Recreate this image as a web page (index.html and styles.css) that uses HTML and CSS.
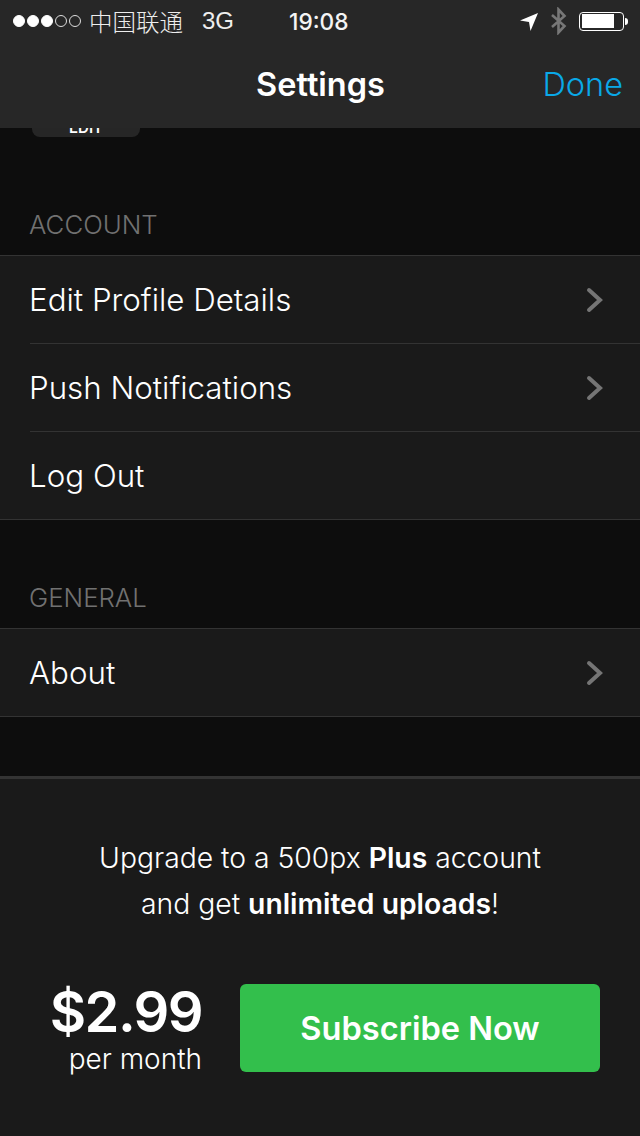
FILE: index.html
```html
<!DOCTYPE html>
<html lang="zh">
<head>
    <meta charset="UTF-8">
    <meta name="viewport" content="width=device-width, initial-scale=1.0">
    <title>Settings</title>
    <link rel="stylesheet" href="styles.css">
</head>
<body>

<div class="topbar">
    <div class="status">
        <div class="signal">
            <span class="dot on"></span><span class="dot on"></span><span class="dot on"></span><span class="dot"></span><span class="dot"></span>
        </div>
        <span class="carrier">中国联通</span>
        <span class="network">3G</span>
        <span class="time">19:08</span>
        <div class="status-right">
            <svg class="arrow" width="20" height="20" viewBox="0 0 20 20"><path d="M1 9.500 19 2 11.500 20 10 11z" fill="#fff"/></svg>
            <svg class="bt" width="17" height="28" viewBox="0 0 17 28"><path d="M2 8 14.500 19 8.500 25.500V2.500L14.500 9 2 20" fill="none" stroke="#777" stroke-width="2.600"/></svg>
            <div class="battery"><div class="battery-fill"></div></div>
            <div class="battery-tip"></div>
        </div>
    </div>
    <div class="navbar">
        <span class="nav-side"></span>
        <h1 class="nav-title">Settings</h1>
        <span class="nav-side nav-done">Done</span>
    </div>
</div>

<div class="scroll">
    <div class="edit-chip"><span>EDIT</span></div>

    <div class="section-label first">ACCOUNT</div>
    <div class="group">
        <div class="row">
            <span>Edit Profile Details</span>
            <svg class="chevron" width="18" height="26" viewBox="0 0 18 26"><path d="M3 3 14 13 3 23" fill="none" stroke="#757575" stroke-width="4" stroke-linecap="round" stroke-linejoin="miter"/></svg>
        </div>
        <div class="row">
            <span>Push Notifications</span>
            <svg class="chevron" width="18" height="26" viewBox="0 0 18 26"><path d="M3 3 14 13 3 23" fill="none" stroke="#757575" stroke-width="4" stroke-linecap="round" stroke-linejoin="miter"/></svg>
        </div>
        <div class="row">
            <span>Log Out</span>
        </div>
    </div>

    <div class="section-label">GENERAL</div>
    <div class="group">
        <div class="row">
            <span>About</span>
            <svg class="chevron" width="18" height="26" viewBox="0 0 18 26"><path d="M3 3 14 13 3 23" fill="none" stroke="#757575" stroke-width="4" stroke-linecap="round" stroke-linejoin="miter"/></svg>
        </div>
    </div>
</div>

<div class="upgrade">
    <p class="pitch">Upgrade to a 500px <b>Plus</b> account<br>and get <b>unlimited uploads</b>!</p>
    <div class="buy">
        <div class="price">
            <div class="amount">$2.99</div>
            <div class="period">per month</div>
        </div>
        <a class="subscribe">Subscribe Now</a>
    </div>
</div>

</body>
</html>
```

FILE: styles.css
```css
html, body {
    margin: 0;
    padding: 0;
}
body {
    width: 640px;
    height: 1136px;
    overflow: hidden;
    background: #1a1a1a;
    color: #fff;
    font-family: 'Inter', 'Liberation Sans', 'Noto Sans CJK SC', sans-serif;
    font-weight: 300;
    display: flex;
    flex-direction: column;
}

/* top bar */
.topbar {
    height: 128px;
    background: #272727;
    flex: none;
}
.status {
    height: 42px;
    display: flex;
    align-items: center;
    padding: 0 12px 0 13px;
    font-family: 'Liberation Sans', 'Noto Sans CJK SC', sans-serif;
    font-weight: 400;
    font-size: 24px;
}
.signal {
    display: flex;
    gap: 2px;
}
.dot {
    width: 12px;
    height: 12px;
    box-sizing: border-box;
    border: 1px solid #ddd;
    border-radius: 50%;
}
.dot.on {
    background: #fff;
    border-color: #fff;
}
.carrier {
    margin-left: 8px;
    font-family: 'Noto Sans CJK SC', sans-serif;
    font-weight: 300;
    font-size: 23.500px;
    color: #eee;
}
.network {
    margin-left: 19px;
    color: #eee;
}
.time {
    margin-left: 55px;
    font-family: 'Inter', sans-serif;
    font-size: 22.700px;
    font-weight: 500;
    color: #f4f4f4;
}
.status-right {
    margin-left: auto;
    display: flex;
    align-items: center;
}
.arrow {
    margin-right: 11px;
}
.bt {
    margin-right: 12px;
}
.battery {
    width: 45px;
    height: 19px;
    box-sizing: border-box;
    border: 1.500px solid #fff;
    border-radius: 4px;
    padding: 1.500px;
}
.battery-fill {
    width: 32px;
    height: 100%;
    background: #fff;
}
.battery-tip {
    width: 3px;
    height: 7px;
    margin-left: 1px;
    background: #fff;
    border-radius: 0 3px 3px 0;
}
.navbar {
    height: 84px;
    display: flex;
    align-items: center;
    justify-content: space-between;
    padding: 0 17px 2px 18px;
}
.nav-side {
    width: 100px;
    text-align: right;
}
.nav-title {
    margin: 0;
    font-size: 32.500px;
    font-weight: 600;
}
.nav-done {
    font-size: 32.500px;
    color: #0aa9e8;
}

/* list */
.scroll {
    height: 648px;
    flex: none;
    background: #0d0d0d;
    overflow: hidden;
}
.edit-chip {
    width: 108px;
    height: 9px;
    margin-left: 32px;
    background: #262626;
    border-radius: 0 0 8px 8px;
    overflow: hidden;
    text-align: center;
    font-size: 15px;
    font-weight: 600;
    line-height: 0;
}
.section-label {
    height: 45px;
    margin-top: 63px;
    padding-left: 29px;
    font-size: 25.800px;
    line-height: 30px;
    color: #717171;
}
.section-label.first {
    margin-top: 73px;
}
.group {
    background: #1a1a1a;
    border-top: 1px solid #333;
    border-bottom: 1px solid #333;
}
.row {
    height: 87px;
    margin-left: 30px;
    padding-right: 36px;
    display: flex;
    align-items: center;
    justify-content: space-between;
    font-size: 31.300px;
    border-bottom: 1px solid #333;
}
.row span {
    margin: 1px 0 0 -1px;
}
.row:last-child {
    border-bottom: none;
}

/* upgrade panel */
.upgrade {
    flex: 1;
    border-top: 3px solid #333;
    background: #1a1a1a;
}
.pitch {
    margin: 56px 0 0;
    text-align: center;
    font-size: 28.300px;
    line-height: 46px;
}
.pitch b {
    font-weight: 600;
}
.buy {
    display: flex;
    align-items: center;
    gap: 38px;
    margin-top: 53px;
    padding: 0 40px;
}
.price {
    width: 162px;
    padding-top: 2px;
    text-align: right;
}
.amount {
    font-size: 56px;
    font-weight: 600;
    line-height: 60px;
    letter-spacing: -1.600px;
}
.period {
    font-size: 28px;
    line-height: 34px;
}
.subscribe {
    flex: 1;
    height: 88px;
    display: flex;
    align-items: center;
    justify-content: center;
    background: #33bf4c;
    border-radius: 6px;
    font-size: 32.600px;
    font-weight: 600;
}
```
